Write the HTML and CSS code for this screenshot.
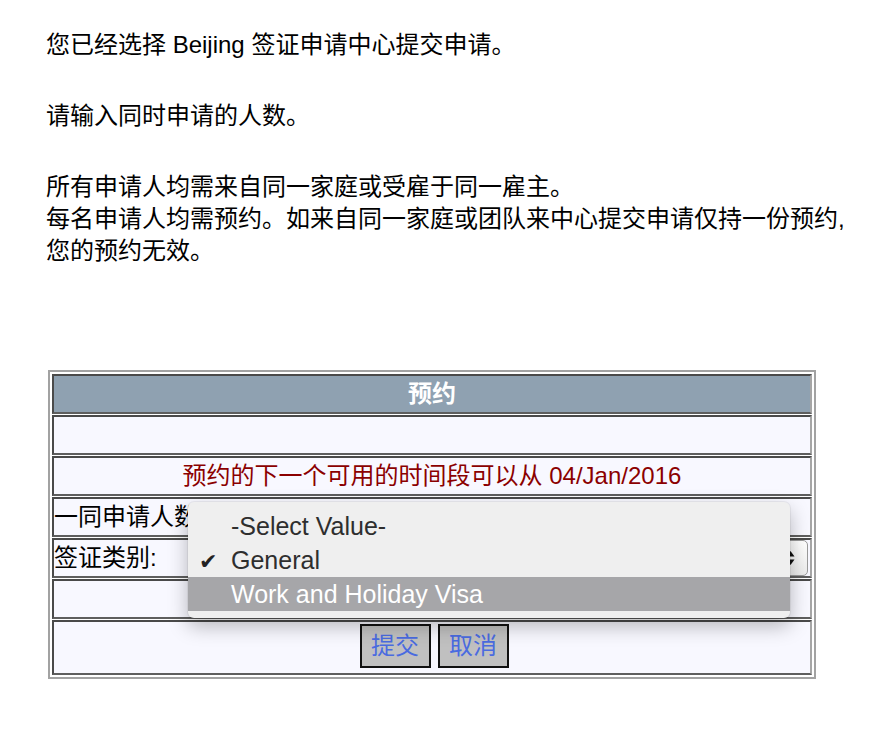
FILE: index.html
```html
<!DOCTYPE html>
<html lang="zh-CN">
<head>
    <meta charset="UTF-8">
    <meta name="viewport" content="width=device-width, initial-scale=1.0">
    <title>预约</title>
    <link rel="stylesheet" href="styles.css">
</head>
<body>
    <div class="page">
        <div class="intro">
            <p>您已经选择 Beijing 签证申请中心提交申请。</p>
            <p>请输入同时申请的人数。</p>
            <p>所有申请人均需来自同一家庭或受雇于同一雇主。<br>每名申请人均需预约。如来自同一家庭或团队来中心提交申请仅持一份预约,<br>您的预约无效。</p>
        </div>

        <div class="booking">
            <div class="row row-head">预约</div>
            <div class="row"></div>
            <div class="row row-note">预约的下一个可用的时间段可以从 04/Jan/2016</div>
            <div class="row row-field">
                <span class="label">一同申请人数:</span>
                <span></span>
            </div>
            <div class="row row-field">
                <span class="label">签证类别:</span>
                <div class="select">
                    <svg class="select-arrows" width="9" height="16" viewBox="0 0 9 16">
                        <path d="M4.5 1 L8.5 6.5 L0.5 6.5 Z" fill="#111"/>
                        <path d="M4.5 15 L8.5 9.5 L0.5 9.5 Z" fill="#111"/>
                    </svg>
                </div>
            </div>
            <div class="row"></div>
            <div class="row row-actions">
                <button class="btn">提交</button>
                <button class="btn">取消</button>
            </div>

            <!-- open list of the visa type select -->
            <div class="popup">
                <div class="option">-Select Value-</div>
                <div class="option"><span class="check">✔</span>General</div>
                <div class="option option-active">Work and Holiday Visa</div>
            </div>
        </div>
    </div>
</body>
</html>
```

FILE: styles.css
```css
* {
    box-sizing: border-box;
}

body {
    margin: 0;
    background: #fff;
    color: #000;
    font-family: "Liberation Sans", "Noto Sans CJK SC", sans-serif;
    font-size: 24px;
}

.page {
    padding: 29px 0 0 46px;
}

.intro p {
    margin: 0 0 39px;
    line-height: 32px;
}

.intro p:last-child {
    margin-bottom: 0;
}

.booking {
    position: relative;
    width: 768px;
    margin: 103px 0 0 2px;
    padding: 2px;
    border: 2px solid #a2a2a2;
    display: flex;
    flex-direction: column;
    gap: 1px;
}

.row {
    height: 40px;
    background: #f8f8ff;
    border-top: 2px solid #4a4a4a;
    border-left: 2px solid #4a4a4a;
    border-right: 2px solid #a6a6a6;
    border-bottom: 2px solid #5e5e5e;
    display: flex;
    align-items: center;
    line-height: 30px;
}

.row-head {
    background: #8fa1b1;
    color: #fff;
    font-weight: bold;
    justify-content: center;
}

.row-note {
    color: #8b0000;
    justify-content: center;
}

.row-field {
    display: grid;
    grid-template-columns: 134px 1fr;
    align-items: center;
}

.label {
    white-space: nowrap;
}

.select {
    height: 36px;
    margin-right: 2px;
    border: 1px solid #9a9a9a;
    border-radius: 5px;
    background: linear-gradient(#ffffff, #ececec);
    position: relative;
}

.select-arrows {
    position: absolute;
    right: 12px;
    top: 9px;
}

.row-actions {
    height: 55px;
    align-items: flex-start;
    justify-content: center;
    gap: 7px;
    padding: 2px 0 0 4px;
}

.btn {
    width: 71px;
    height: 44px;
    padding: 0;
    background: #c0c0c0;
    border: 2px solid #111;
    color: #4a6be0;
    font-family: inherit;
    font-size: 24px;
    line-height: 1;
}

.popup {
    position: absolute;
    left: 138px;
    top: 130px;
    width: 602px;
    padding: 7px 0;
    background: #efefef;
    border-radius: 6px;
    box-shadow: 0 8px 20px rgba(0, 0, 0, 0.28), 0 0 0 1px rgba(0, 0, 0, 0.05);
    font-size: 25px;
}

.option {
    position: relative;
    height: 34px;
    padding-left: 43px;
    display: flex;
    align-items: center;
    color: #2e2e2e;
}

.option-active {
    background: #a6a6a9;
    color: #fff;
}

.check {
    position: absolute;
    left: 11px;
    top: 8px;
    font-family: "DejaVu Sans", sans-serif;
    font-size: 22px;
    line-height: 1;
    color: #222;
}
```
